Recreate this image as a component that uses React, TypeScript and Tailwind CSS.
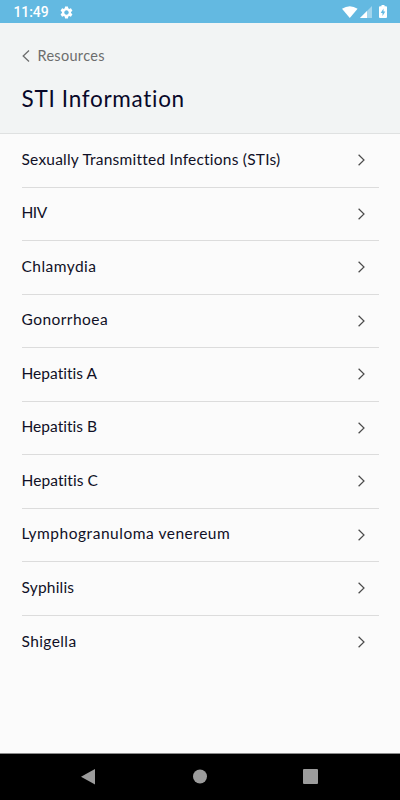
import { MdSettings } from "react-icons/md";

const topics = [
  { name: "Sexually Transmitted Infections (STIs)", tracking: "tracking-[0.22px]" },
  { name: "HIV", tracking: "tracking-[-0.5px]" },
  { name: "Chlamydia", tracking: "tracking-[0.46px]" },
  { name: "Gonorrhoea", tracking: "tracking-[0.45px]" },
  { name: "Hepatitis A", tracking: "tracking-[0.02px]" },
  { name: "Hepatitis B", tracking: "tracking-[0.02px]" },
  { name: "Hepatitis C", tracking: "tracking-[0.08px]" },
  { name: "Lymphogranuloma venereum", tracking: "tracking-[0.53px]" },
  { name: "Syphilis", tracking: "tracking-[0.2px]" },
  { name: "Shigella", tracking: "tracking-[0.4px]" },
];

const StatusBar = () => {
  return (
    <div className="flex h-[23px] shrink-0 items-center justify-between bg-[#63b9e1] pl-[13.5px] pr-[13.5px] text-white">
      <div className="flex items-center gap-[10px] pt-px">
        <span className="font-[Roboto,sans-serif] text-[14px] font-medium leading-[20px] tracking-[-0.1px]">
          11:49
        </span>
        <MdSettings className="size-[15px]" />
      </div>
      <div className="flex items-center">
        <svg width="16" height="12" viewBox="0 0 16 12" className="mr-[2px]">
          <path d="M0 2.7Q7.8-2.4 15.6 2.7L7.8 12Z" fill="currentColor" />
        </svg>
        <svg width="12" height="12" viewBox="0 0 12 12" className="mr-[7px]">
          <path d="M0 12 12 0V12Z" fill="currentColor" opacity="0.4" />
          <path d="M0 12 7 5V12Z" fill="currentColor" />
        </svg>
        <svg width="8" height="13" viewBox="0 0 8 13">
          <path
            d="M2.5 0h3v1.3H7q1 0 1 1V12q0 1-1 1H1q-1 0-1-1V2.3q0-1 1-1h1.5Z"
            fill="currentColor"
          />
          <path d="M4.5 3.5 1.7 8H3.5v3L6.3 6.6H4.5Z" fill="#63b9e1" />
        </svg>
      </div>
    </div>
  );
};

const Header = () => {
  return (
    <header className="h-[111px] shrink-0 border-b border-[#dfe1e1] bg-[#f2f4f4] px-[21.5px] pt-[22px]">
      <button className="flex items-center gap-2 text-[#6c6d6d]">
        <svg width="8" height="12" viewBox="0 0 8 12" fill="none">
          <path d="M7 .5 1.2 6 7 11.5" stroke="currentColor" strokeWidth="1.3" />
        </svg>
        <span className="pt-px text-[14.5px] leading-[20px] tracking-[0.3px]">
          Resources
        </span>
      </button>
      <h1 className="mt-[18px] text-[22.5px] leading-[30px] tracking-[0.7px] text-[#080829]">
        STI Information
      </h1>
    </header>
  );
};

const App = () => {
  return (
    <div className="flex h-[800px] w-[400px] flex-col overflow-hidden bg-[#fbfbfb] font-[Lato,sans-serif] [font-variant-ligatures:none]">
      <StatusBar />
      <Header />
      <ul className="flex-1 px-[21.5px]">
        {topics.map((topic) => {
          return (
            <li
              key={topic.name}
              className="flex h-[53.5px] items-center justify-between border-b border-[#dcdcdc] pr-[14px] last:border-b-0"
            >
              <span
                className={`pb-[3.5px] text-[15.5px] leading-[20px] text-[#101026] ${topic.tracking}`}
              >
                {topic.name}
              </span>
              <svg width="7" height="12" viewBox="0 0 7 12" fill="none">
                <path d="M.6 .7 6 6 .6 11.3" stroke="#4b4b4b" strokeWidth="1.2" />
              </svg>
            </li>
          );
        })}
      </ul>
      <nav className="flex h-[47px] shrink-0 border-t border-[#8b8b8b] bg-black">
        <svg width="400" height="46" fill="#9c9c9c">
          <path d="M81 22.7 95 15V30.4Z" />
          <circle cx="200" cy="22.5" r="7" />
          <rect x="303" y="15" width="15" height="15" rx="1" />
        </svg>
      </nav>
    </div>
  );
};

export default App;
